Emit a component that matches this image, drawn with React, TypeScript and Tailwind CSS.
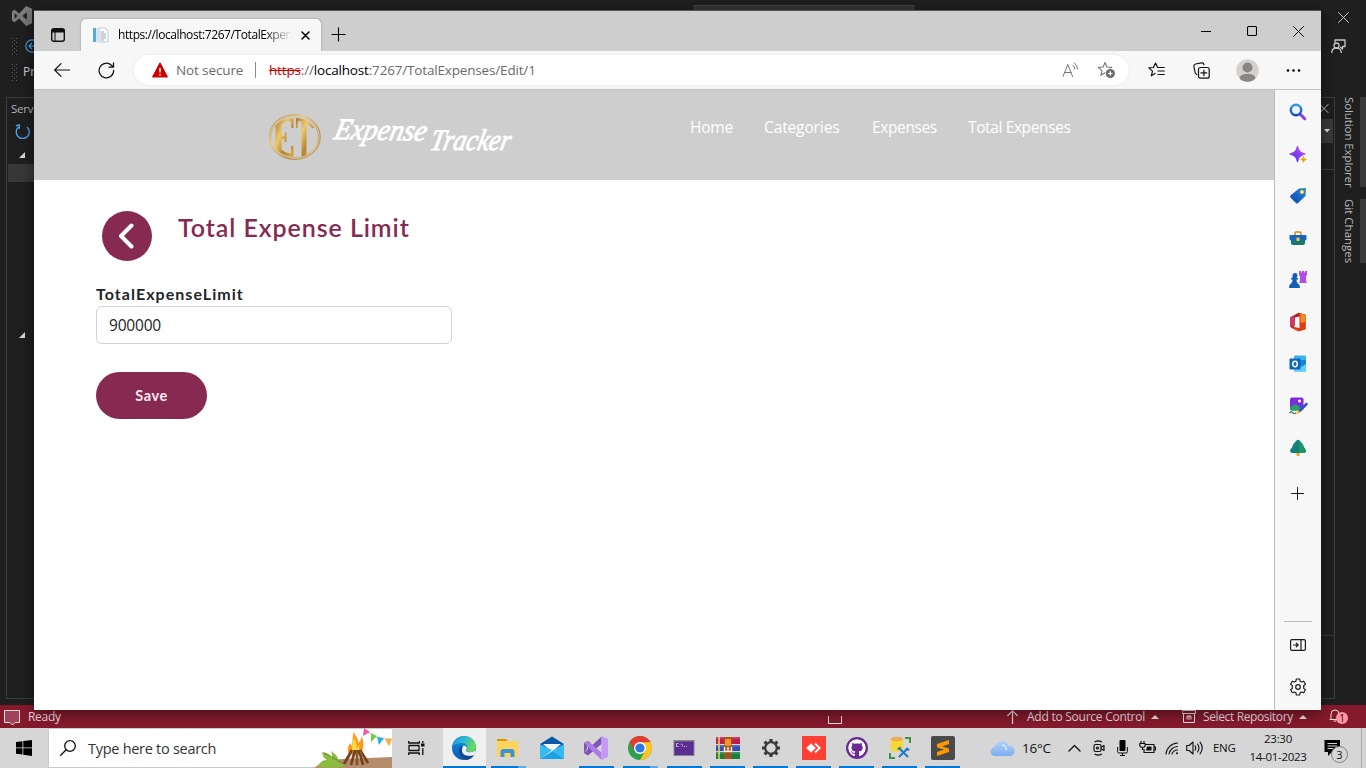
import React from "react";
import { FaGithub } from "react-icons/fa";

type P = { className?: string };

const line = { fill: "none", stroke: "currentColor", strokeLinecap: "round" as const, strokeLinejoin: "round" as const };

function Grip() {
  return (
    <svg className="h-[17px] w-[5px] shrink-0 text-[#5c5c5c]" viewBox="0 0 5 17" fill="currentColor">
      {[0, 4, 8, 12, 16].map((y) => (
        <g key={y}>
          <rect x="0" y={y} width="1" height="1" />
          <rect x="4" y={y} width="1" height="1" />
          <rect x="2" y={y === 16 ? 14 : y + 2} width="1" height="1" />
        </g>
      ))}
    </svg>
  );
}

function VsMark({ className }: P) {
  return (
    <svg className={className} viewBox="0 0 24 24">
      <path fillRule="evenodd" fill="currentColor" d="M16.500 1 23 4v16l-6.500 3-7.600-8.200L4 18.700 1 17.200V6.800l3-1.500 4.900 3.900L16.500 1Zm.8 7L12.500 12l4.800 4V8ZM4 9v6l3-3-3-3Z" />
    </svg>
  );
}

function VsLeft() {
  return (
    <div className="flex w-[34px] flex-col overflow-hidden">
      <div className="flex h-[32px] items-center pl-[11px]">
        <VsMark className="h-[22px] w-[22px] shrink-0 text-[#7b7b7b]" />
      </div>
      <div className="flex h-[28px] items-center gap-[8px] pl-[12px]">
        <Grip />
        <svg className="h-[14px] w-[14px] shrink-0 text-[#4a9fe8]" viewBox="0 0 14 14" {...line} strokeWidth="1.200">
          <circle cx="7" cy="7" r="6.200" />
          <path d="M10 7H4m2.500-2.500L4 7l2.500 2.500" />
        </svg>
      </div>
      <div className="flex h-[24px] items-center gap-[6px] pl-[12px] text-[12px] text-[#cfcfcf]">
        <Grip />
        <span>Pr</span>
      </div>
      <div className="mt-[13px] ml-[6px] flex h-[602px] flex-col border border-r-0 border-[#3d3d3d]">
        <span className="h-[22px] pl-[4px] text-[11.500px] leading-[21px] tracking-[-0.2px] text-[#b5b5b5]">Serv</span>
        <svg className="ml-[8px] mt-[4px] h-[15px] w-[15px]" viewBox="0 0 15 15" fill="none" stroke="#4a9fe8" strokeWidth="1.400">
          <path d="M3.500 3A6.500 6.500 0 1 0 12 3M.8 1.800 4.300 1v4" />
        </svg>
        <svg className="ml-[12px] mt-[13px] h-[6px] w-[6px]" viewBox="0 0 6 6"><path d="M6 0v6H0Z" fill="#d8d8d8" /></svg>
        <div className="mt-[6px] ml-px h-[18px] shrink-0 bg-[#383838]" />
        <svg className="ml-[12px] mt-[150px] h-[6px] w-[6px]" viewBox="0 0 6 6"><path d="M6 0v6H0Z" fill="#d8d8d8" /></svg>
      </div>
    </div>
  );
}

function VsRight() {
  return (
    <div className="flex w-[45px] flex-col overflow-hidden text-[#c8c8c8]">
      <div className="flex h-[32px] items-end justify-center">
        <svg className="mb-[9px] h-[11px] w-[11px]" viewBox="0 0 11 11" {...line}><path d="m.5.5 10 10m0-10-10 10" /></svg>
      </div>
      <div className="flex h-[28px] items-center pl-[10px]">
        <svg className="h-[15px] w-[15px]" viewBox="0 0 15 15" {...line} strokeLinecap="butt" strokeWidth="1.300">
          <path d="M4 3.500V1h10v6.500h-2.500V10L9 8" />
          <circle cx="5.500" cy="6.500" r="2.500" />
          <path d="M.7 14c0-3 1.800-5 4.800-5s4.800 2 4.800 5" />
        </svg>
      </div>
      <div className="flex h-[639px] pt-[37px]">
        <div className="flex h-[602px] w-[14px] flex-col border-y border-r border-[#3d3d3d]">
          <svg className="mt-[6px] h-[9px] w-[8px]" viewBox="0 0 8 9" {...line}><path d="m-1 .5 8 8m0-8-8 8" /></svg>
          <div className="mt-[6px] flex h-[24px] w-[12px] items-center bg-[#3a3a3a] pl-[3px]">
            <svg className="h-[4px] w-[6px]" viewBox="0 0 6 4"><path d="M0 0h6L3 3.500Z" fill="#e0e0e0" /></svg>
          </div>
          <div className="mt-[26px] h-[467px] border-y border-[#3d3d3d]" />
        </div>
        <div className="ml-[6px] flex w-[17px] flex-col text-[11.500px] leading-[17px] whitespace-nowrap text-[#b9b9b9] [writing-mode:vertical-rl]">
          <div className="flex">
            <span className="h-[102px] tracking-[-0.1px]">Solution Explorer</span>
            <span>Git Changes</span>
          </div>
        </div>
        <div className="ml-[2px] flex w-[6px] flex-col gap-[12px]">
          <div className="h-[90px] bg-[#3a3a3a]" />
          <div className="h-[64px] bg-[#3a3a3a]" />
        </div>
      </div>
    </div>
  );
}

function StatusBar() {
  return (
    <div className="flex h-[23px] shrink-0 items-center bg-[#861a2d] text-[12px] text-[#f0dfe2]">
      <svg className="ml-[4px] mt-[2px] h-[16px] w-[16px]" viewBox="0 0 16 16"><path d="M.5.500h15v12H11L8.500 15 6 12.500H.5Z" fill="#a04357" stroke="#f3dfe3" /></svg>
      <span className="ml-[8px] w-[800px] tracking-[-0.3px]">Ready</span>
      <svg className="mt-[8px] h-[9px] w-[14px]" viewBox="0 0 14 9" {...line}><path d="M.5 0v7.500h13V0" /></svg>
      <svg className="ml-[165px] h-[14px] w-[11px]" viewBox="0 0 11 14" {...line} strokeWidth="1.200"><path d="M5.500 13.500V1M.8 5.500 5.500.8l4.700 4.700" /></svg>
      <span className="ml-[9px] w-[118px] whitespace-nowrap tracking-[-0.25px]">Add to Source Control</span>
      <svg className="ml-[6px] h-[4px] w-[8px]" viewBox="0 0 8 4"><path d="M0 4 4 0l4 4Z" fill="currentColor" /></svg>
      <svg className="ml-[23px] h-[13px] w-[14px]" viewBox="0 0 14 13" {...line} strokeLinejoin="miter"><path d="M.5.500h13v3H.5Zm1 3v9h11v-9M5 9V6h4v3M7 6v3.500" /></svg>
      <span className="ml-[7px] w-[91px] whitespace-nowrap tracking-[-0.37px]">Select Repository</span>
      <svg className="ml-[5px] h-[4px] w-[8px]" viewBox="0 0 8 4"><path d="M0 4 4 0l4 4Z" fill="currentColor" /></svg>
      <div className="relative ml-[22px] mt-[-2px] h-[15px] w-[13px]">
        <svg className="h-[14px] w-[12px]" viewBox="0 0 12 14" {...line}><path d="M1 11.500h10M2 11V6a4 4 0 0 1 8 0v5M5 13h2" /></svg>
        <span className="absolute left-[7px] top-[4px] flex h-[12px] w-[12px] items-center justify-center rounded-full bg-[#ff96a5] text-[10px] leading-none text-[#30060d]">1</span>
      </div>
    </div>
  );
}

function TabBar() {
  return (
    <div className="flex h-[40px] shrink-0 items-end bg-[#cecece]">
      <div className="flex h-[32px] w-[47px] items-center pl-[17px]">
        <svg className="h-[14px] w-[14px]" viewBox="0 0 14 14"><rect x=".7" y=".7" width="12.600" height="12.600" rx="2" fill="none" stroke="#111" strokeWidth="1.400" /><path d="M1 1h12v3.500H1Z" fill="#111" /><path d="M4 4v9" stroke="#111" /></svg>
      </div>
      <div className="flex h-[32px] w-[240px] items-center rounded-t-[5px] bg-[#f7f7f7] shadow-[0_0_2px_rgba(0,0,0,0.35)]">
        <svg className="ml-[11px] h-[16px] w-[17px]" viewBox="0 0 17 16">
          <path d="M1 1h3v14H1Z" fill="#5ba7d8" /><path d="M4 1h2v14H4Z" fill="#cfe6f5" />
          <path d="M7 1h6l3 3v11H7Z" fill="#fbfcfe" stroke="#b3bdcd" strokeWidth=".8" />
          <path d="M8.500 5H12m-3.500 2H14m-5.500 2H14m-5.500 2H14m-5.500 2H12" stroke="#93a1b8" strokeWidth=".9" />
        </svg>
        <span className="ml-[9px] w-[174px] overflow-hidden bg-gradient-to-r from-black from-84% to-transparent bg-clip-text text-[12px] leading-[18px] tracking-[-0.42px] whitespace-nowrap text-transparent">https://localhost:7267/TotalExpen</span>
        <svg className="ml-[9px] h-[9px] w-[9px]" viewBox="0 0 9 9" {...line} strokeWidth="1.500"><path d="m1 1 7 7m0-7-7 7" /></svg>
      </div>
      <svg className="mb-[9px] ml-[10px] h-[15px] w-[15px]" viewBox="0 0 15 15" {...line} strokeLinecap="butt"><path d="M.5 7.500h14M7.500.5v14" strokeWidth="1.100" /></svg>
      <div className="ml-auto flex h-full items-center pr-[17px]">
        <div className="h-px w-[10px] bg-black" />
        <svg className="ml-[36px] h-[10px] w-[10px]" viewBox="0 0 10 10" {...line}><rect x=".5" y=".5" width="9" height="9" rx="1.200" strokeWidth="1.100" /></svg>
        <svg className="ml-[36px] h-[11px] w-[11px]" viewBox="0 0 11 11" {...line}><path d="m.5.5 10 10m0-10-10 10" /></svg>
      </div>
    </div>
  );
}

const star = "M7.500 1 9.400 5.500l4.800.4-3.700 3.200 1.200 4.700-4.200-2.500-4.200 2.500 1.200-4.700L.8 5.900l4.800-.4Z";

function Toolbar() {
  return (
    <div className="flex h-[39px] shrink-0 items-center border-b border-[#c3c3c3] bg-[#f7f7f7] text-[#111]">
      <svg className="ml-[20px] h-[14px] w-[16px]" viewBox="0 0 16 14" {...line} strokeWidth="1.200"><path d="M15.500 7H.7M7 .7.700 7 7 13.300" /></svg>
      <svg className="ml-[28px] h-[17px] w-[17px]" viewBox="0 0 17 17" {...line} strokeWidth="1.250"><path d="M15.700 8.500a7.300 7.300 0 1 1-2.300-5.300l1.600 1.500M15.500.8v4.400h-4.400" /></svg>
      <div className="ml-[19px] flex h-[30px] w-[995px] items-center rounded-full bg-white shadow-[0_0_3px_rgba(0,0,0,0.09)]">
        <svg className="ml-[18px] h-[16px] w-[16px]" viewBox="0 0 16 16"><path d="M8 .8 15.500 15H.5Z" fill="#cf0000" stroke="#cf0000" strokeLinejoin="round" /><path d="M8 6v4.500m0 1.500v1.500" stroke="#fff" strokeWidth="1.500" /></svg>
        <span className="ml-[8px] w-[79px] text-[13.500px] leading-[18px] tracking-[-0.12px] whitespace-nowrap text-[#6b6b6b]">Not secure</span>
        <div className="mr-[13px] h-[16px] w-px bg-[#8c8c8c]" />
        <span className="w-[780px] text-[13.500px] leading-[18px] tracking-[-0.17px] whitespace-nowrap text-[#6b6b6b]"><span className="text-[#cf0000] line-through">https</span>://<span className="text-black">localhost</span>:7267/TotalExpenses/Edit/1</span>
        <svg className="ml-[13px] h-[16px] w-[17px] text-[#747474]" viewBox="0 0 17 16" {...line}><path d="M1 14.500 5.800 2.500l4.800 12M2.700 10.500h6.200M11 3.500a4 4 0 0 1 1.800 3.500M12.300 1a7 7 0 0 1 3.200 6" /></svg>
        <svg className="ml-[18px] h-[18px] w-[19px] text-[#747474]" viewBox="0 0 19 18"><path d={star} {...line} transform="translate(.5 .5)" strokeWidth="1.100" /><circle cx="13.300" cy="12.500" r="5.300" fill="#fff" /><circle cx="13.300" cy="12.500" r="4.600" fill="#6a6a6a" /><path d="M11 12.500h4.600m-2.300-2.300v4.600" stroke="#fff" strokeWidth="1.200" /></svg>
      </div>
      <svg className="ml-[19px] h-[16px] w-[17px]" viewBox="0 0 17 16" {...line} strokeWidth="1.200"><path d="m9.500 5.300-2-4.300-2 4.500-4.700.4 3.700 3.200-1.200 4.700L7 11.500M10 5.500h6.300M10 9h6.300M10 12.500h6.300" /></svg>
      <svg className="ml-[28px] h-[17px] w-[17px]" viewBox="0 0 17 17" {...line} strokeWidth="1.200"><rect x="5.500" y="5.500" width="10.700" height="10.700" rx="2" /><path d="M10.900 8v5.700M8 10.900h5.700M3.700 12.500A3 3 0 0 1 2 10L.9 4.500A2.200 2.200 0 0 1 2.500 2L8.800.9a2 2 0 0 1 2.200 1.700" /></svg>
      <svg className="ml-[26px] h-[23px] w-[23px]" viewBox="0 0 23 23"><defs><clipPath id="avatar"><circle cx="11.500" cy="11.500" r="11.200" /></clipPath></defs><circle cx="11.500" cy="11.500" r="11.200" fill="#d3d0ce" /><g clipPath="url(#avatar)" fill="#8a8684"><circle cx="11.500" cy="8.500" r="5" /><ellipse cx="11.500" cy="19.500" rx="8" ry="4.800" /></g></svg>
      <svg className="ml-[27px] h-[3px] w-[15px]" viewBox="0 0 15 3"><circle cx="2" cy="1.500" r="1.300" /><circle cx="7.500" cy="1.500" r="1.300" /><circle cx="13" cy="1.500" r="1.300" /></svg>
    </div>
  );
}

function Logo() {
  return (
    <svg className="ml-[234px] mt-[20px] h-[60px] w-[250px] overflow-visible" viewBox="0 0 250 60">
      <defs>
        <linearGradient id="gold" x1="0" y1="0" x2="1" y2="1"><stop offset="0" stopColor="#b07a2c" /><stop offset=".35" stopColor="#efc866" /><stop offset=".65" stopColor="#b9832f" /><stop offset="1" stopColor="#dca94a" /></linearGradient>
      </defs>
      <ellipse cx="26.800" cy="27" rx="25.400" ry="22.500" fill="none" stroke="url(#gold)" strokeWidth="1.100" />
      <ellipse cx="26.800" cy="27" rx="23.600" ry="21" fill="none" stroke="url(#gold)" strokeWidth=".6" />
      <g fill="url(#gold)">
        <path d="M25.500 8C18 8 11 11 7.500 16V38c3.500 5 10.500 8.500 18 8.700V36H23v7.500c-4-.5-7-1.500-9.500-4V29h3v3h2V22h-2v4h-3V14.500C16 12 19 11 23 11v7h2.500Z" />
        <path d="M28 8c7.500.2 14 3.500 18 9.500l-2 1c-2-3-3.500-4-5.500-5V45c-1.500.8-3 1.200-5 1.500V11.500L30 11l-.5 7H28Z" />
      </g>
      <g fill="#fff" stroke="#fff" strokeWidth=".9" fontFamily="'Liberation Serif', serif" fontStyle="italic">
        <text fontSize="30" textLength="92" lengthAdjust="spacingAndGlyphs" transform="translate(65 29) rotate(1) skewX(-12)">Expense</text>
        <text fontSize="30" textLength="80" lengthAdjust="spacingAndGlyphs" transform="translate(161 39.500) skewX(-12)">Tracker</text>
      </g>
    </svg>
  );
}

function Page() {
  return (
    <main className="flex w-[1240px] flex-col bg-white">
      <header className="flex h-[90px] bg-[#cecece]">
        <Logo />
        <nav className="mt-[25px] ml-[172px] flex text-[15.500px] leading-[24px] tracking-[-0.38px] whitespace-nowrap text-white">
          <a className="w-[74px] tracking-[-0.2px]">Home</a>
          <a className="w-[108px] tracking-[-0.12px]">Categories</a>
          <a className="w-[96px]">Expenses</a>
          <a>Total Expenses</a>
        </nav>
      </header>
      <div className="flex pt-[31px] pl-[68px]">
        <button className="flex h-[50px] w-[50px] items-center justify-center rounded-full bg-[#862a51]">
          <svg className="mr-[2px] h-[26px] w-[16px] text-white" viewBox="0 0 16 26" {...line} strokeWidth="4"><path d="M13.500 2.500 3 13l10.500 10.500" /></svg>
        </button>
        <h1 className="ml-[26px] font-['Lato','Inter',sans-serif] text-[25px] leading-[33px] font-semibold tracking-[0.93px] text-[#862a51]">Total Expense Limit</h1>
      </div>
      <form className="flex flex-col items-start pl-[62px] pt-[22px]">
        <label className="h-[23px] font-['Lato',sans-serif] text-[16px] leading-[21px] font-bold tracking-[1.050px] text-[#212529]">TotalExpenseLimit</label>
        <div className="flex h-[38px] w-[356px] items-center rounded-[6px] border border-[#ced4da] pt-[2px] pl-[12px] text-[15.500px] tracking-[-0.2px] text-[#212529]">900000</div>
        <button className="mt-[28px] h-[47px] w-[111px] rounded-[24px] bg-[#862a51] font-['Lato',sans-serif] text-[14.500px] font-bold tracking-[0.6px] text-[#f7eaf0]">Save</button>
      </form>
    </main>
  );
}

function EdgeSidebar() {
  const c = "h-[20px] w-[20px]";
  return (
    <aside className="flex w-[47px] flex-col items-center border-l border-[#bcbcbc] bg-[#f7f7f7] pt-[12px] text-[#1b1b1b]">
      <div className="flex flex-col gap-[22px]">
        <svg className={c} viewBox="0 0 20 20"><defs><linearGradient id="lens" x1="0" y1="0" x2="0" y2="1"><stop stopColor="#2d9be8" /><stop offset="1" stopColor="#1546bd" /></linearGradient></defs><path d="m12.500 12.500 4.200 4.200" stroke="#8a3ee8" strokeWidth="3" strokeLinecap="round" /><circle cx="8" cy="8" r="5.200" fill="#e9f5fc" stroke="url(#lens)" strokeWidth="2.400" /></svg>
        <svg className={c} viewBox="0 0 20 20"><defs><linearGradient id="spark" x1="0" y1="1" x2="1" y2="0"><stop stopColor="#3f2bf0" /><stop offset="1" stopColor="#d052f2" /></linearGradient></defs><path d="M9.500 2.500c1 5 2.500 6 7.500 7.500-5 1.500-6.500 2.500-7.500 7.500-1-5-2.500-6-7.500-7.500 5-1.500 6.500-2.500 7.500-7.500Z" fill="url(#spark)" stroke="url(#spark)" strokeWidth="1.300" strokeLinejoin="round" /><path d="M15.500 12.500c.4 2 1 2.600 3 3-2 .4-2.600 1-3 3-.4-2-1-2.600-3-3 2-.4 2.600-1 3-3Z" fill="#efa600" stroke="#efa600" strokeWidth=".8" /></svg>
        <svg className={c} viewBox="0 0 20 20"><defs><linearGradient id="tag" x1="1" y1="0" x2="0" y2="1"><stop stopColor="#2693e6" /><stop offset="1" stopColor="#0c3fa5" /></linearGradient></defs><path d="M11 2.500 17 2q1 0 1 1l-.5 7-7.500 7q-1 1-2 0L2.500 11.500q-1-1 0-2Z" fill="url(#tag)" /><circle cx="14" cy="6" r="1.700" fill="#fff4bb" stroke="#f2bf2b" /></svg>
        <svg className={c} viewBox="0 0 20 20"><path d="M7 7V5q0-1 1-1h4q1 0 1 1v2" fill="none" stroke="#d78c10" strokeWidth="1.500" /><path d="M3 10h14v5q0 2-2 2H5q-2 0-2-2Z" fill="#157b68" /><path d="M1.500 8q0-1 1-1h15q1 0 1 1v3q0 1.500-2 1.500h-13q-2 0-2-1.500Z" fill="#1466be" /><rect x="8.500" y="9.500" width="3" height="3.500" rx=".8" fill="#ffc43a" /></svg>
        <svg className={c} viewBox="0 0 20 20"><path d="M11 1h2v1.500h1V1h2v1.500h1V1h2v4l-1 1v5l1 2h-8l1-2V6l-1-1Z" fill="#b34be8" /><path d="M4.500 5.500a2.500 2.500 0 1 1 4 2l1.500.8v1.200H8.500c0 2.500 1 4 3 5.500l.5 3H1l.5-3c2-1.500 3-3 3-5.500H3V8.300l1.500-.8Z" fill="#145dbb" /></svg>
        <svg className={c} viewBox="0 0 20 20"><path d="M2 5.500 10.500.8l7 2v14.400l-7 2L3 15.500Z" fill="#b3201c" /><path d="m10.500.8 7 2v14.400l-7 2L3 15.500l8.500.5V4.500Z" fill="#e23b12" /><path d="m12.500 1.500 5 1.500v7l-5 1Z" fill="#f58a16" /><path d="M2 5.500 7 5v8.500L2 15Z" fill="#cf3c61" /><path d="M7 5.500 11.500 4.500V16L5.500 15 7 13.500Z" fill="#f7f7f7" /></svg>
        <svg className={c} viewBox="0 0 20 20"><rect x="6" y="1.500" width="12" height="16" rx="1" fill="#35b3ef" /><path d="M6 6h12v6H6Z" fill="#1685d3" /><path d="m6 12 6 2 6-4v7.500H6Z" fill="#60cffa" /><rect x="1.500" y="4.500" width="11" height="11" rx="1" fill="#0c67bd" /><ellipse cx="7" cy="10" rx="2.300" ry="2.700" fill="none" stroke="#fff" strokeWidth="1.500" /></svg>
        <svg className={c} viewBox="0 0 20 20"><rect x="2" y="1.500" width="13.500" height="13" rx="2" fill="#7b2be0" /><circle cx="11.500" cy="5" r="1.500" fill="#fff" /><path d="M2 12q5-7 11 0v2.500H4q-2 0-2-2.500Z" fill="#25a65b" /><path d="m18.500 8-7 7" stroke="#2f55ce" strokeWidth="2.500" strokeLinecap="round" /><path d="m9.500 13.500 3 3-4 1.500Z" fill="#ffb21c" /><path d="M1.500 17c2-2 3-1 3.500 0s2 1 3-.2" fill="none" stroke="#188348" strokeWidth="1.200" /></svg>
        <svg className={c} viewBox="0 0 20 20"><path d="M8.500 13h3v4q0 1-1 1h-1q-1 0-1-1Z" fill="#eaa319" /><path d="M8.500 2.500q1.500-1.500 3 0l3.500 4 .5 2 2 3c1 2 0 3.500-2 3.500h-11c-2 0-3-1.500-2-3.500l2-3 .5-2Z" fill="#14807a" /><path d="M11.500 2.500l3.500 4 .5 2 2 3c1 2 0 3.500-2 3.500H11Z" fill="#1c9863" /></svg>
      </div>
      <svg className="mt-[29px] mr-[1px] h-[13px] w-[13px]" viewBox="0 0 13 13" {...line}><path d="M.5 6.500h12M6.500.5v12" /></svg>
      <div className="mt-[121px] h-px w-[28px] bg-[#bbb]" />
      <svg className="mt-[17px] h-[12px] w-[16px]" viewBox="0 0 16 12" {...line} strokeWidth="1.200"><rect x=".6" y=".6" width="14.800" height="10.800" rx="1.300" /><path d="M11 1v10M3.500 6H8M6.300 4.200 8.200 6 6.300 7.800" /></svg>
      <svg className="mt-[27px] h-[18px] w-[18px]" viewBox="0 0 18 18" {...line} strokeWidth="1.200"><circle cx="9" cy="9" r="2.300" /><path d="m7.300 1-.4 2.200-1.500.8-2.100-.8-1.700 3 1.700 1.400v2.800L1.600 11.800l1.700 3 2.100-.8 1.500.8.4 2.200h3.400l.4-2.200 1.500-.8 2.100.8 1.700-3-1.700-1.400V7.600l1.700-1.400-1.700-3-2.100.8-1.500-.8L10.700 1Z" /></svg>
    </aside>
  );
}

function Slot({ children, wide, bar = "full", active }: { children: React.ReactNode; wide?: boolean; bar?: "full" | "split" | "none" | "active"; active?: boolean }) {
  return (
    <div className={(wide ? "w-[44px]" : "w-[43px]") + " flex h-[40px] flex-col items-center justify-between"}>
      <div className={"flex h-[38px] w-[43px] items-center justify-center pt-[2px]" + (active ? " bg-[#efefef]" : "")}>{children}</div>
      {bar === "full" && <div className="h-[2px] w-[35px] bg-[#0078d7]" />}
      {bar === "active" && <div className="h-[2px] w-[43px] bg-[#0078d7]" />}
      {bar === "split" && <div className="flex h-[2px] w-[35px]"><div className="w-[27px] bg-[#0078d7]" /><div className="w-[8px] bg-[#62a8e3]" /></div>}
    </div>
  );
}

function Apps() {
  const c = "h-[24px] w-[24px]";
  return (
    <div className="flex">
      <Slot wide active bar="active">
        <svg className={c} viewBox="0 0 24 24"><defs><linearGradient id="e1" x1="0" y1="0" x2="1" y2=".4"><stop stopColor="#1b8fd8" /><stop offset=".5" stopColor="#29b7dc" /><stop offset="1" stopColor="#68dc5c" /></linearGradient><linearGradient id="e2" x1="0" y1="0" x2="0" y2="1"><stop stopColor="#1290df" /><stop offset="1" stopColor="#0b5cb4" /></linearGradient></defs>
          <circle cx="12" cy="12" r="12" fill="url(#e2)" />
          <path d="M0 11C1 4 6 0 12 0c7 0 12 5 12 10.500 0 3.500-3 5.500-6 5.500-3.500 0-4.500-1.500-3.500-2.500 2-2 .5-6.500-5-6.500C5 7 2 8.500 0 11Z" fill="url(#e1)" />
          <path d="M9 10c-4 5-1 13 6 14 3-.5 6-2.500 7.500-5.500-5 2.800-12 1-12.500-4 0-2 .5-3.500 1-4Z" fill="#124a8f" />
          <path d="M11.500 9.500c3 0 4 2.500 2.800 4-1 1.500.5 2.700 3.700 2.700 2.500 0 4.500-1 5.500-2.700v3l-1 2.500c-6 2-12 .5-12.500-4-.2-2.500.5-4.500 1.500-5.500Z" fill="#efefef" />
        </svg>
      </Slot>
      <Slot wide bar="split">
        <svg className={c} viewBox="0 0 24 24"><path d="M1 3h9l2 2H1Z" fill="#d9960b" /><path d="M1 5h21v16H1Z" fill="#ffd45c" /><path d="M4.500 21v-5q0-3 3-3h8q3 0 3 3v5h-4v-4h-6v4Z" fill="#3c92d8" /></svg>
      </Slot>
      <Slot wide bar="none">
        <svg className={c} viewBox="0 0 24 24"><path d="M0 8 12 .5 24 8v5H0Z" fill="#0b57a6" /><path d="M3 8h18L12 16Z" fill="#f4f4f4" /><path d="M0 8l12 6-12 9Z" fill="#35bbf2" /><path d="m24 8-24 15h24Z" fill="#1aa2e8" /><path d="m12 15 12 8V8Z" fill="#36b9ef" /></svg>
      </Slot>
      <Slot wide>
        <svg className={c} viewBox="0 0 24 24"><path d="M0 7 4 5l6 5-6 5V9.500L0 13Z" fill="#644394" /><path d="M0 17V7l3 4v2Zm0 0 17.500-16.500V8L4 19.500Z" fill="#7d57b7" /><path d="m0 7 4-2 13.500 11.500V24Z" fill="#ac7de6" /><path d="M17.500 0 24 3v18l-6.500 3Z" fill="#c599f5" /></svg>
      </Slot>
      <Slot wide bar="split">
        <svg className={c} viewBox="0 0 24 24"><circle cx="12" cy="12" r="12" fill="#2da14b" /><path d="M1.600 6A12 12 0 0 1 22.400 6L12 12 6.800 15Z" fill="#e33b2e" /><path d="M22.400 6A12 12 0 0 1 12 24l5.200-9L12 6.600Z" fill="#fcc521" /><circle cx="12" cy="12" r="6" fill="#fff" /><circle cx="12" cy="12" r="4.600" fill="#2c7be5" /></svg>
      </Slot>
      <Slot wide>
        <svg className={c} viewBox="0 0 24 24"><rect x="1.500" y="4" width="21" height="16" fill="#858489" /><rect x="2.500" y="5.500" width="19" height="13.500" fill="#5b2c91" /><path d="M6.500 7.500H4.500v3h2M8 8v.5m0 1.500v.5M9.500 7.500l1.500 3m1 0h1m1 0h1" stroke="#e2d3ed" strokeWidth=".8" fill="none" /></svg>
      </Slot>
      <Slot>
        <svg className={c} viewBox="0 0 24 24"><path d="M0 1h24v7H0Z" fill="#bc1e4c" /><path d="M0 9h24v6H0Z" fill="#384bb0" /><path d="M0 16h24v7H0Z" fill="#19813c" /><path d="M3 1v22" stroke="#e9cf55" strokeWidth="1.600" /><path d="M0 2h24M0 10h24M0 17h24" stroke="#fff" strokeOpacity=".3" /><path d="M8.500 1h7v22h-7Z" fill="#a8531a" /><path d="M9 3h6v7H9Z" fill="#f49720" /><path d="M8.500 11v4.500h7V11m-3.500 0v4" fill="none" stroke="#f8eee1" strokeWidth="1.500" /></svg>
      </Slot>
      <Slot>
        <svg className="h-[20px] w-[20px]" viewBox="0 0 20 20"><circle cx="10" cy="10" r="5.800" fill="none" stroke="#3b3b3b" strokeWidth="2.200" /><g stroke="#3b3b3b" strokeWidth="3.200"><path d="M10 1v3m0 12v3M1 10h3m12 0h3M3.600 3.600l2 2m8.800 8.800 2 2m0-12.800-2 2m-8.800 8.800-2 2" /></g></svg>
      </Slot>
      <Slot>
        <svg className={c} viewBox="0 0 24 24"><rect width="24" height="24" fill="#fc4034" /><path d="m9 7.500 4.800 4.500L9 16.500 4.200 12Z" fill="#fff" /><path d="m13 7.500 4.700 4.500L13 16.500" stroke="#fff" strokeWidth="1.800" fill="none" /></svg>
      </Slot>
      <Slot>
        <span className="flex h-[22px] w-[22px] items-center justify-center rounded-full bg-[#6c2b94]"><FaGithub className="h-[18px] w-[18px] rounded-full text-white" /></span>
      </Slot>
      <Slot>
        <svg className={c} viewBox="0 0 24 24"><path d="M3 3v11c0 2 12 2 12 0V3" fill="#f9d92e" /><ellipse cx="9" cy="3" rx="6" ry="2.300" fill="#f1a857" /><path d="M17 2h5v5M2 17v5h5" stroke="#3b9741" strokeWidth="2" fill="none" /><path d="m11 12 9 9m0-9-9 9" stroke="#1878c9" strokeWidth="2" /><path d="M9.500 13.500 12.500 11m6 1 .5 1.500 2.500.5" stroke="#1878c9" strokeWidth="1.600" fill="none" /></svg>
      </Slot>
      <Slot>
        <svg className={c} viewBox="0 0 24 24"><rect width="24" height="24" rx="2" fill="#4a4a4a" /><path d="m6 8 12-4v4l-7 2.400 7 2.100v3.500l-12 4v-4l7-2.400-7-2.100Z" fill="#ff9800" /></svg>
      </Slot>
    </div>
  );
}

function SearchArt() {
  return (
    <svg className="ml-auto h-[40px] w-[78px]" viewBox="0 0 78 40">
      <path d="M0 40c8-6 18-9 30-9l48-2v11Z" fill="#b48e6c" />
      <path d="M3 38c4-3 4-6 10-6-3-2-4-3-5-8 5 1 8 2 10 6 0-3 0-5-1-7 6 4 8 7 7 12l9 2c-6 3-19 4-30 1Z" fill="#8bbb3f" /><path d="M10 25c8 4 13 7 20 11" stroke="#5e922c" fill="none" />
      <path d="M40 4c1 4 5 7 4 11 3-2 3-5 4-7 1 6 3 9-1 18H35c-2-4-1-7 1-11l2 3c1-5 0-9 2-14Z" fill="#ff9817" /><path d="M40 10c3 6 3 8 2 11l3-4c1 5-1 9-4 10-4-2-3-9-1-17Z" fill="#ffde4a" />
      <path d="m38 22-8 14m11-14-4 15m6-15v15m2-15 4 15m-3-15 8 13" stroke="#76431f" strokeWidth="2.800" /><path d="m39 23-7 13m11-13v13m3-13 6 12" stroke="#b46f3c" strokeWidth=".8" />
      <path d="M49 0c8 8 16 11 29 11" stroke="#cfcfcf" fill="none" /><path d="m50 0 6 4-7 4Z" fill="#f558ae" /><path d="m57 5 6 3-6 6Z" fill="#77cc45" /><path d="m63 9 7 1-5 7Z" fill="#26b2e6" /><path d="m71 11 7-.5-3 8Z" fill="#ffab39" />
    </svg>
  );
}

function Taskbar() {
  return (
    <div className="flex h-[40px] shrink-0 bg-[#d6d6d6] text-[#111]">
      <div className="flex w-[48px] items-center justify-center">
        <svg className="h-[16px] w-[16px]" viewBox="0 0 16 16"><path d="m0 2 6.500-.8v6.300H0Zm7.300-.9L16 0v7.500H7.300ZM0 8.300h6.500v6.200L0 13.800Zm7.300 0H16V16l-8.700-1.300Z" /></svg>
      </div>
      <div className="flex w-[344px] items-center border border-r-0 border-[#c9c9c9] bg-white">
        <svg className="ml-[11px] h-[16px] w-[16px]" viewBox="0 0 16 16" {...line} strokeWidth="1.300"><circle cx="10" cy="6" r="5.300" /><path d="M6.200 9.800.7 15.300" /></svg>
        <span className="mt-px ml-[12px] text-[14.500px] tracking-[-0.28px] whitespace-nowrap text-[#333]">Type here to search</span>
        <SearchArt />
      </div>
      <div className="flex w-[50px] items-center pl-[16px]">
        <svg className="h-[16px] w-[17px]" viewBox="0 0 17 16" {...line} strokeLinecap="butt" strokeWidth="1.300"><path d="M.7 1v2h10.600V1M.7 15v-2h10.600v2M1 5.500h10v5H1ZM14.800 1v2m0 5v7" /><path d="M13 3.500h3.500v3H13Z" fill="currentColor" stroke="none" /></svg>
      </div>
      <Apps />
      <div className="flex items-center pl-[26px]">
        <svg className="h-[17px] w-[25px]" viewBox="0 0 25 17"><defs><linearGradient id="cloud" x1="0" y1="0" x2="0" y2="1"><stop stopColor="#b8d1f6" /><stop offset="1" stopColor="#7daef0" /></linearGradient></defs><path d="M5 16a4.500 4.500 0 0 1 0-9C6 3 9 1 12 1c4 0 6 2 6.500 5 4-.5 6 2 6 5s-2 5-5 5Z" fill="url(#cloud)" /><path d="M12 5c3 0 4 2 4.500 5" stroke="#dbe8fb" strokeWidth="1.500" fill="none" /></svg>
        <span className="ml-[7px] w-[31px] text-[13.500px] tracking-[-0.25px] whitespace-nowrap">16°C</span>
        <svg className="ml-[15px] h-[8px] w-[13px]" viewBox="0 0 13 8" {...line} strokeWidth="1.400"><path d="m1 7 5.500-5.500L12 7" /></svg>
        <svg className="ml-[12px] h-[16px] w-[12px]" viewBox="0 0 12 16" {...line} strokeWidth="1.200"><rect x="1" y="4.500" width="7" height="7" rx="1.500" /><path d="m8.500 7 2.500-1.500v5L8.500 9M2 1.800Q5 0 8.500 1.800M2 14.200Q5 16 8.500 14.200" /><circle cx="4.500" cy="8" r="1" /></svg>
        <svg className="ml-[12px] h-[16px] w-[11px]" viewBox="0 0 11 16"><rect x="2.500" y="0" width="6" height="11" rx="1" /><path d="M.6 7v4.500Q.6 13 2 13h7q1.400 0 1.400-1.500V7M5.500 13v2.500M3 15.500h5" fill="none" stroke="currentColor" /></svg>
        <svg className="ml-[11px] h-[14px] w-[17px]" viewBox="0 0 17 14" {...line} strokeLinecap="butt" strokeWidth="1.200"><path d="M6.500 3.500H15v8H5V8M15.500 6h1v3h-1M2 0v2.500m3-2.500v2.500M.8 2.500h5.400v2q-.5 2-2.700 2t-2.700-2ZM3.500 6.500V9" /><path d="M8 5.500h4.500v4H7Z" fill="currentColor" stroke="none" /></svg>
        <svg className="ml-[9px] h-[14px] w-[14px]" viewBox="0 0 14 14" {...line} strokeWidth="1.100"><path d="M1 13A12 12 0 0 1 12.500 2M4 13a9 9 0 0 1 8.500-7.500M7 13a6 6 0 0 1 5.500-4" /><circle cx="12" cy="12.300" r="1" fill="currentColor" stroke="none" /></svg>
        <svg className="ml-[7px] h-[14px] w-[18px]" viewBox="0 0 18 14" {...line} strokeWidth="1.100"><path d="M.7 4.500h2.500L7 1v12L3.200 9.500H.7ZM9 4.800q1.500 2.200 0 4.400M11.500 3q3 4 0 8M14 1.200q4.500 5.800 0 11.600" /></svg>
        <span className="ml-[9px] w-[24px] text-[11.500px] tracking-[-0.3px]">ENG</span>
        <div className="ml-[9px] flex w-[64px] flex-col items-center text-[11.500px] leading-[18px] tracking-[-0.3px] whitespace-nowrap"><span>23:30</span><span>14-01-2023</span></div>
        <div className="relative ml-[14px] h-[26px] w-[26px]">
          <svg className="mt-[4px] h-[17px] w-[17px]" viewBox="0 0 17 17"><path d="M.5 1H16v12H8l-4 4v-4H.5Z" /><path d="M3.500 4.500H13M3.500 7H13M3.500 9.500H9" stroke="#d6d6d6" strokeWidth="1" /></svg>
          <span className="absolute left-[7px] top-[11px] flex h-[17px] w-[17px] items-center justify-center rounded-full border border-[#808080] bg-[#d6d6d6] text-[11px] leading-none">3</span>
        </div>
      </div>
      <div className="ml-auto w-[5px] border-l border-[#aaa]" />
    </div>
  );
}

export default function App() {
  return (
    <div className="relative flex h-[768px] w-[1366px] flex-col overflow-hidden bg-[#1f1f1f] font-['Open_Sans','Noto_Sans',sans-serif]">
      <div className="flex h-[705px] shrink-0">
        <VsLeft />
        <div className="mt-[5px] mr-auto ml-[660px] h-[14px] w-[220px] border border-[#454545] bg-[#333]" />
        <VsRight />
      </div>
      <StatusBar />
      <section className="absolute top-[10px] left-[34px] flex h-[700px] w-[1287px] flex-col border-t border-[#555] bg-white shadow-[0_3px_14px_rgba(0,0,0,0.5)]">
        <TabBar />
        <Toolbar />
        <div className="flex min-h-0 flex-1">
          <Page />
          <EdgeSidebar />
        </div>
      </section>
      <div className="relative">
        <Taskbar />
      </div>
    </div>
  );
}
